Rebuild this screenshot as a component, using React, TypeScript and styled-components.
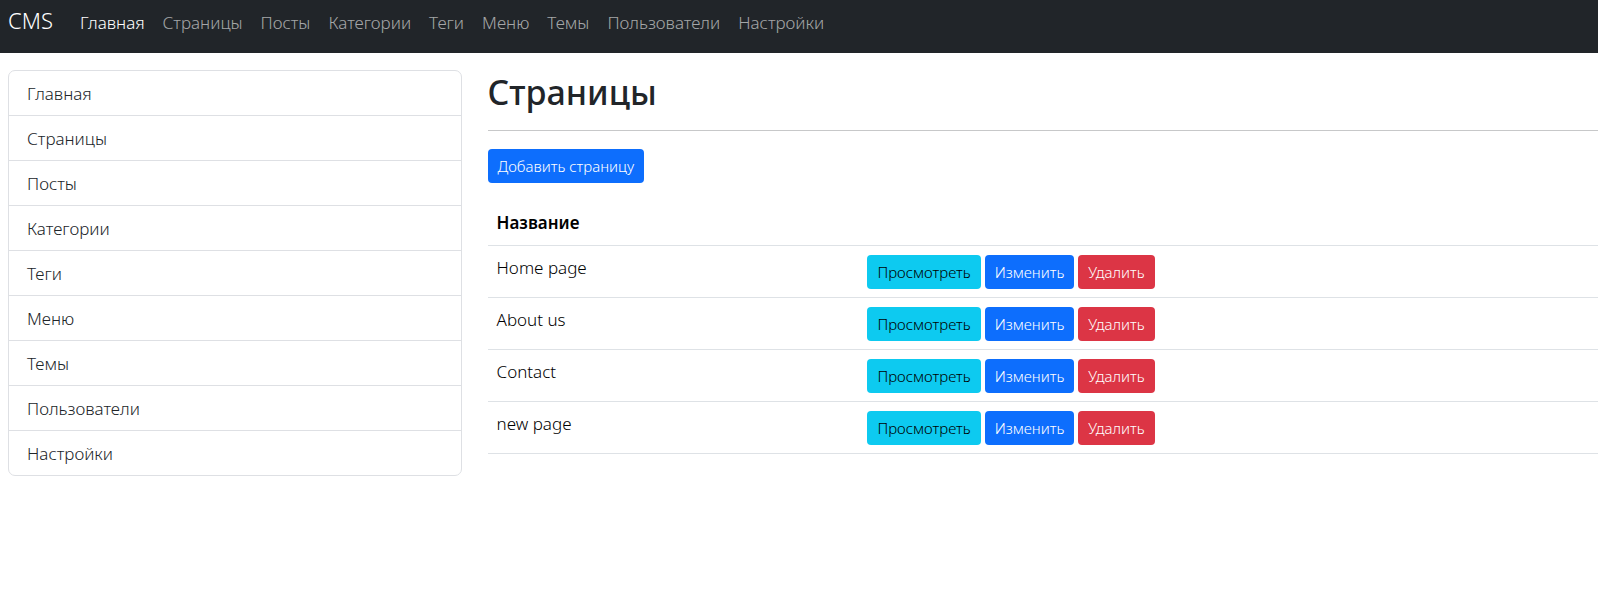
import React from 'react';
import styled, { createGlobalStyle } from 'styled-components';

const GlobalStyle = createGlobalStyle`
  *, *::before, *::after { box-sizing: border-box; }
  body {
    margin: 0;
    background: #fff;
    color: #212529;
    font-family: "Segoe UI", "Noto Sans", sans-serif;
    font-size: 17px;
    font-weight: 300;
    line-height: 26px;
  }
`;

const Navbar = styled.header`
  display: flex;
  align-items: baseline;
  gap: 27px;
  min-height: 53px;
  padding: 4px 8px 0;
  background: #212529;
`;

const Brand = styled.a`
  color: #fff;
  font-size: 22px;
  line-height: 32px;
  text-decoration: none;
`;

const Nav = styled.nav`
  display: flex;
  flex-wrap: wrap;
  gap: 18px;
`;

const NavLink = styled.a<{ $active?: boolean }>`
  color: ${(p) => (p.$active ? '#fff' : 'rgba(255, 255, 255, 0.6)')};
  text-decoration: none;
`;

const Layout = styled.div`
  display: grid;
  grid-template-columns: 29fr 71fr;
  column-gap: 26px;
  align-items: start;
  padding: 17px 0 0 8px;
`;

const ListGroup = styled.nav`
  display: flex;
  flex-direction: column;
  border: 1px solid #dee0e4;
  border-radius: 7px;
  overflow: hidden;
`;

const ListItem = styled.a`
  padding: 10px 18px 8px;
  color: #212529;
  text-decoration: none;

  & + & {
    border-top: 1px solid #dee0e4;
  }
`;

const Content = styled.main`
  min-width: 0;
`;

const Title = styled.h1`
  margin: 0 0 16px;
  font-size: 34px;
  font-weight: 500;
  line-height: 44px;
`;

const Divider = styled.hr`
  margin: 0 0 18px;
  border: 0;
  border-top: 1px solid #c7c8c9;
`;

const tones = {
  primary: { background: '#0d6efd', color: '#fff' },
  info: { background: '#0dcaf0', color: '#000' },
  danger: { background: '#dc3545', color: '#fff' },
};

const Button = styled.button<{ $tone: keyof typeof tones }>`
  display: block;
  height: 34px;
  padding: 0 10px;
  border: 0;
  border-radius: 4px;
  background: ${(p) => tones[p.$tone].background};
  color: ${(p) => tones[p.$tone].color};
  font: inherit;
  font-size: 15px;
  line-height: 34px;
  white-space: nowrap;
  cursor: pointer;
`;

const Actions = styled.div`
  display: flex;
  gap: 4px;
`;

const Table = styled.table`
  width: 100%;
  margin-top: 17px;
  border-collapse: collapse;
  table-layout: fixed;
  color: #000;
`;

const HeadCell = styled.th`
  width: ${(p) => p.width};
  padding: 10px 9px 9px;
  border-bottom: 1px solid #dee2e6;
  font-weight: 600;
  text-align: left;
`;

const Cell = styled.td`
  padding: 9px 9px 8px;
  border-bottom: 1px solid #dee2e6;
  vertical-align: top;
`;

const sections = [
  'Главная',
  'Страницы',
  'Посты',
  'Категории',
  'Теги',
  'Меню',
  'Темы',
  'Пользователи',
  'Настройки',
];

const pages = ['Home page', 'About us', 'Contact', 'new page'];

export default function App() {
  return (
    <>
      <GlobalStyle />
      <Navbar>
        <Brand href="#">CMS</Brand>
        <Nav>
          {sections.map((name, i) => (
            <NavLink key={name} href="#" $active={i === 0}>
              {name}
            </NavLink>
          ))}
        </Nav>
      </Navbar>
      <Layout>
        <ListGroup>
          {sections.map((name) => (
            <ListItem key={name} href="#">
              {name}
            </ListItem>
          ))}
        </ListGroup>
        <Content>
          <Title>Страницы</Title>
          <Divider />
          <Button type="button" $tone="primary">
            Добавить страницу
          </Button>
          <Table>
            <thead>
              <tr>
                <HeadCell scope="col" width="33.4%">
                  Название
                </HeadCell>
                <HeadCell as="td" />
              </tr>
            </thead>
            <tbody>
              {pages.map((page) => (
                <tr key={page}>
                  <Cell>{page}</Cell>
                  <Cell>
                    <Actions>
                      <Button type="button" $tone="info">
                        Просмотреть
                      </Button>
                      <Button type="button" $tone="primary">
                        Изменить
                      </Button>
                      <Button type="button" $tone="danger">
                        Удалить
                      </Button>
                    </Actions>
                  </Cell>
                </tr>
              ))}
            </tbody>
          </Table>
        </Content>
      </Layout>
    </>
  );
}
